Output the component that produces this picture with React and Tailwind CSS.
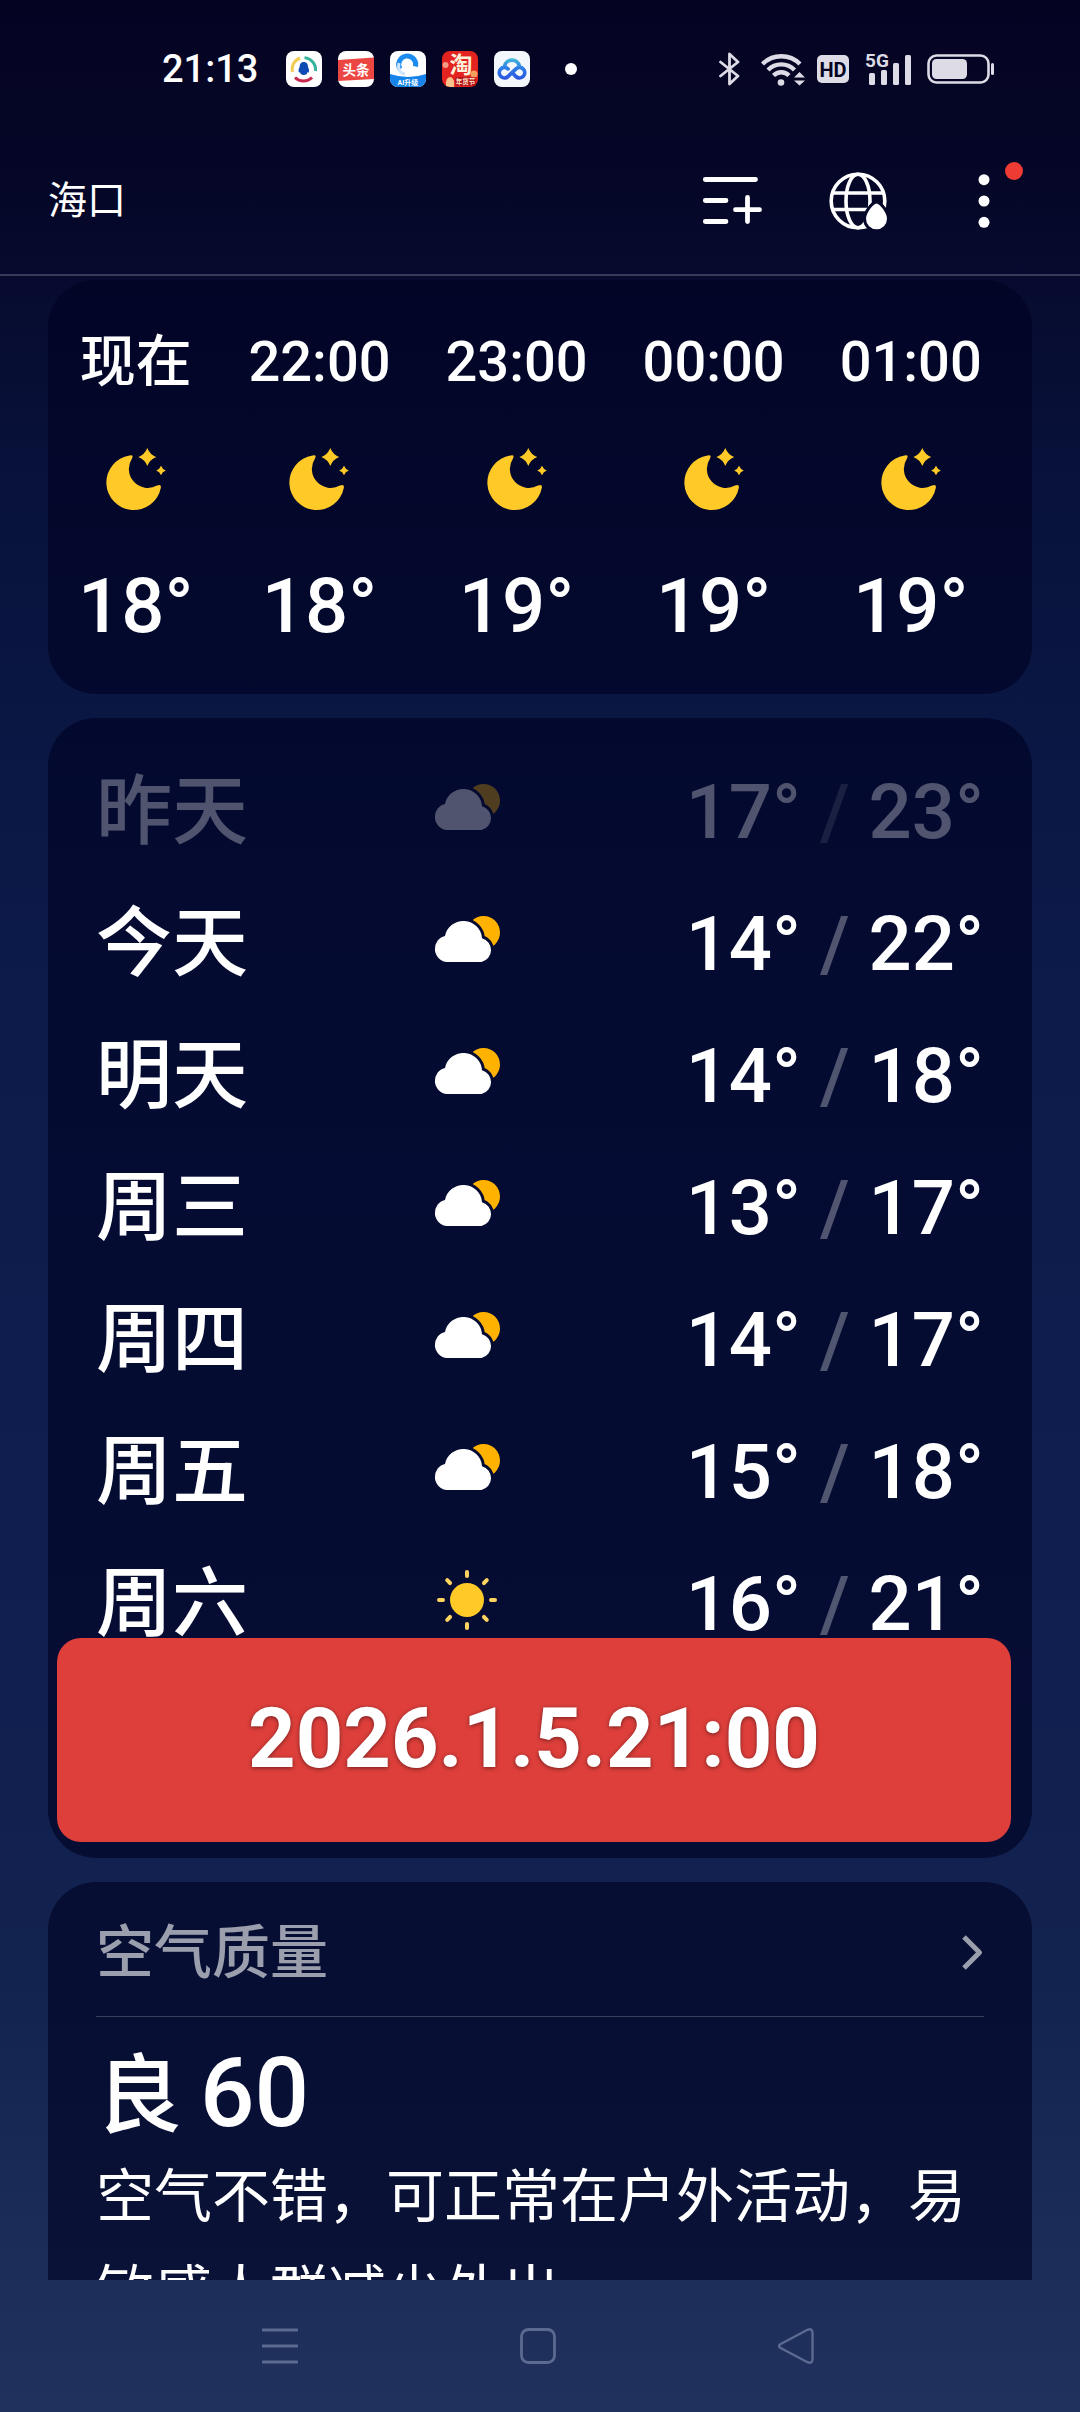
const hours = [
  { time: '现在', temp: 18 },
  { time: '22:00', temp: 18 },
  { time: '23:00', temp: 19 },
  { time: '00:00', temp: 19 },
  { time: '01:00', temp: 19 },
];

const days = [
  { name: '昨天', icon: 'cloud', low: 17, high: 23, past: true },
  { name: '今天', icon: 'cloud', low: 14, high: 22 },
  { name: '明天', icon: 'cloud', low: 14, high: 18 },
  { name: '周三', icon: 'cloud', low: 13, high: 17 },
  { name: '周四', icon: 'cloud', low: 14, high: 17 },
  { name: '周五', icon: 'cloud', low: 15, high: 18 },
  { name: '周六', icon: 'sun', low: 16, high: 21 },
];

function MoonIcon() {
  return (
    <svg viewBox="0 0 72 72" className="size-[72px]" fill="#ffc928" aria-hidden="true">
      <path d="M29.5 11.4Q34 10.2 32 14.5A19 19 0 0 0 57 41.6Q61.6 39.6 60.8 44A27.5 27.5 0 1 1 29.5 11.4Z" />
      <path d="M47.3 4Q49.8 10.5 56.3 13Q49.8 15.5 47.3 22Q44.8 15.5 38.3 13Q44.8 10.5 47.3 4Z" />
      <path d="M61 21.7Q62.3 25.2 65.8 26.5Q62.3 27.8 61 31.3Q59.7 27.8 56.2 26.5Q59.7 25.2 61 21.7Z" />
    </svg>
  );
}

function CloudIcon() {
  const cloud =
    'M16 54A13.2 13.2 0 0 1 14 28A18.7 18.7 0 0 1 51 30.3A12.2 12.2 0 0 1 50.5 54Z';
  return (
    <svg viewBox="0 0 72 72" className="size-[72px]" aria-hidden="true">
      <mask id="cloud-gap">
        <rect width="72" height="72" fill="#fff" />
        <path d={cloud} fill="#000" stroke="#000" strokeWidth="6" />
      </mask>
      <circle cx="52.5" cy="24.5" r="16.5" fill="#ffb300" mask="url(#cloud-gap)" />
      <path d={cloud} fill="#fff" />
    </svg>
  );
}

function SunIcon() {
  return (
    <svg viewBox="0 0 72 72" className="size-[72px]" aria-hidden="true">
      <circle cx="36" cy="32" r="17" fill="#ffc928" />
      {[0, 45, 90, 135, 180, 225, 270, 315].map((a) => (
        <path
          key={a}
          d="M36 4V8"
          transform={`rotate(${a} 36 32)`}
          stroke="#ffd560"
          strokeWidth="4"
          strokeLinecap="round"
        />
      ))}
    </svg>
  );
}

function AppIcons() {
  return (
    <div className="flex gap-4">
      <svg viewBox="0 0 36 36" className="size-9" aria-hidden="true">
        <rect width="36" height="36" rx="8" fill="#fff" />
        <g fill="none" strokeWidth="3">
          <path d="M6.500 21A12 12 0 0 1 14 7" stroke="#f2cb52" />
          <path d="M18.500 6.800A12 12 0 0 1 29.500 20" stroke="#35b39a" />
          <path d="M9 26.500A12 12 0 0 0 26 26.500" stroke="#c9284f" />
        </g>
        <path
          d="M17.800 11C14.800 11 13.600 13.300 13.600 16C12.500 18 12.300 20 12.900 21.500C13.500 21.800 14 21 14 21C14 22.500 15 24 17.800 24C20.600 24 21.500 22.500 21.600 21C21.600 21 22.200 21.800 22.700 21.500C23.300 20 23.100 18 22 16C22 13.300 20.800 11 17.800 11Z"
          fill="#0f4bb5"
        />
      </svg>
      <svg viewBox="0 0 36 36" className="size-9" aria-hidden="true">
        <rect width="36" height="36" rx="8" fill="#fff" />
        <path d="M0 9L36 6.500V28L0 30Z" fill="#ec4643" />
        <text
          x="18"
          y="23.500"
          fontSize="13.500"
          fontWeight="700"
          fill="#fff"
          textAnchor="middle"
          fontFamily="Noto Sans CJK SC, sans-serif"
        >
          头条
        </text>
      </svg>
      <svg viewBox="0 0 36 36" className="size-9" aria-hidden="true">
        <rect width="36" height="36" rx="8" fill="#fff" />
        <path d="M0 23Q18 29 36 23V28A8 8 0 0 1 28 36H8A8 8 0 0 1 0 28Z" fill="#1583ea" />
        <path d="M10 18A8.500 8.500 0 1 1 25.500 15.500" fill="none" stroke="#1c8cf0" strokeWidth="5" />
        <path d="M9 12Q7 22 15 23" fill="none" stroke="#cfe6fb" strokeWidth="3" />
        <text
          x="18"
          y="34"
          fontSize="7"
          fontWeight="700"
          fill="#fff"
          textAnchor="middle"
          fontFamily="Roboto, Noto Sans CJK SC, sans-serif"
        >
          AI升级
        </text>
      </svg>
      <svg viewBox="0 0 36 36" className="size-9 overflow-visible" aria-hidden="true">
        <rect width="36" height="36" rx="8" fill="#e2231f" />
        <circle cx="3.500" cy="14" r="3" fill="#f49a86" />
        <circle cx="32" cy="23" r="3.500" fill="#f5a05c" />
        <path d="M4 35Q3 26 9 26Q13 28 12 36H8Z" fill="#f6c48a" />
        <text
          x="19"
          y="22"
          fontSize="23"
          fontWeight="700"
          fill="#fdf0d8"
          textAnchor="middle"
          fontFamily="Noto Sans CJK SC, sans-serif"
        >
          淘
        </text>
        <rect x="13" y="26" width="21" height="9" rx="2" fill="#b8141c" />
        <text
          x="23.500"
          y="33"
          fontSize="6.500"
          fontWeight="700"
          fill="#fde6c8"
          textAnchor="middle"
          fontFamily="Noto Sans CJK SC, sans-serif"
        >
          年货节
        </text>
      </svg>
      <svg viewBox="0 0 36 36" className="size-9" aria-hidden="true">
        <defs>
          <linearGradient id="pan" gradientUnits="userSpaceOnUse" x1="0" y1="7" x2="0" y2="28">
            <stop offset="0" stopColor="#45bcd6" />
            <stop offset="0.500" stopColor="#2f7be8" />
            <stop offset="1" stopColor="#2d55dc" />
          </linearGradient>
        </defs>
        <rect width="36" height="36" rx="8" fill="#f4f8fd" />
        <g fill="none" stroke="url(#pan)" strokeWidth="3.800" strokeLinecap="round">
          <path d="M10.500 15.500A7.600 7.600 0 0 1 25.500 15.500" />
          <path d="M14 25.500A5.200 5.200 0 1 1 14 17.800M22 17.800A5.200 5.200 0 1 1 22 25.500L18.500 22M14 25.500L22 17.800" />
        </g>
      </svg>
    </div>
  );
}

function StatusBar() {
  return (
    <div className="flex h-[138px] shrink-0 items-center justify-between pl-[162px] pr-[85px]">
      <div className="flex items-center">
        <time className="w-[124px] text-[38px] font-medium leading-none">21:13</time>
        <AppIcons />
        <span className="ml-[35px] size-3 rounded-full bg-white" />
      </div>
      <div className="flex items-center text-[#dddbe5]">
        <svg viewBox="0 0 22 34" className="mr-5 h-[34px] w-[22px]" aria-hidden="true">
          <path
            d="M1.500 10L19 24L10.500 32V2L19 10L1.500 24"
            fill="none"
            stroke="currentColor"
            strokeWidth="2.800"
            strokeLinejoin="round"
            strokeLinecap="round"
          />
        </svg>
        <svg viewBox="0 0 44 34" className="mr-3 h-[34px] w-[44px]" aria-hidden="true">
          <g fill="none" stroke="currentColor" strokeWidth="4.400">
            <path d="M1.500 12A26.500 26.500 0 0 1 39 12" />
            <path d="M7 18A18.500 18.500 0 0 1 33.500 18" />
            <path d="M12.500 23.500A11 11 0 0 1 28 23.500" />
          </g>
          <circle cx="20" cy="30.500" r="3.300" fill="currentColor" />
          <path d="M38.500 20L44 25.500H33ZM38.500 33.500L44 28.500H33Z" fill="currentColor" />
        </svg>
        <svg viewBox="0 0 32 28" className="mr-3.5 h-7 w-8" aria-hidden="true">
          <rect width="32" height="28" rx="5" fill="currentColor" />
          <text
            x="16"
            y="21.500"
            fontSize="20"
            fontWeight="700"
            fill="#050423"
            textAnchor="middle"
            fontFamily="Roboto, sans-serif"
          >
            HD
          </text>
        </svg>
        <svg
          viewBox="0 0 48 34"
          className="mr-4 h-[34px] w-12 overflow-visible"
          fill="currentColor"
          aria-hidden="true"
        >
          <text x="2" y="15" fontSize="19" fontWeight="700" fontFamily="Roboto, sans-serif">
            5G
          </text>
          <rect x="6" y="21" width="6" height="12" rx="1.500" />
          <rect x="18" y="18" width="6" height="15" rx="1.500" />
          <rect x="30" y="11" width="6" height="22" rx="1.500" />
          <rect x="42" y="3" width="6" height="30" rx="1.500" />
        </svg>
        <svg viewBox="0 0 68 30" className="h-[30px] w-[68px]" aria-hidden="true">
          <rect x="1.500" y="1.500" width="60" height="27" rx="8" fill="none" stroke="currentColor" strokeWidth="2.600" />
          <rect x="5" y="5" width="35" height="20" rx="4.500" fill="currentColor" />
          <rect x="64" y="9" width="3" height="12" rx="1.500" fill="currentColor" />
        </svg>
      </div>
    </div>
  );
}

function Header() {
  const drop =
    'M50.500 34.500C53.500 34.500 61 43.500 61 49.800A10.500 10.500 0 0 1 40 49.800C40 43.500 47.500 34.500 50.500 34.500Z';
  return (
    <>
      <header className="mb-2.5 flex h-[126px] shrink-0 items-center justify-between pl-12 pr-16">
        <h1 className="text-[39px] leading-none">海口</h1>
        <div className="flex gap-[62px]">
          <button type="button" aria-label="添加城市">
            <svg viewBox="0 0 64 64" className="size-16" aria-hidden="true">
              <path
                d="M5.300 10.500H55.500M5.300 31.500H26M5.300 52.500H26M35.500 40.700H59.500M47.500 28.500V52.500"
                stroke="#fff"
                strokeWidth="4.800"
                strokeLinecap="round"
              />
            </svg>
          </button>
          <button type="button" aria-label="天气地图">
            <svg viewBox="0 0 64 64" className="size-16" aria-hidden="true">
              <mask id="drop-gap">
                <rect width="64" height="64" fill="#fff" />
                <path d={drop} fill="#000" stroke="#000" strokeWidth="6" />
              </mask>
              <g fill="none" stroke="#fff" strokeWidth="3.600" mask="url(#drop-gap)">
                <circle cx="32" cy="32" r="26.800" />
                <ellipse cx="32" cy="32" rx="12" ry="26.800" />
                <path d="M7 24H57M7 40.500H57" />
              </g>
              <path d={drop} fill="#fff" />
            </svg>
          </button>
          <button type="button" aria-label="更多" className="relative">
            <svg viewBox="0 0 64 64" className="size-16" fill="#fff" aria-hidden="true">
              <circle cx="32" cy="10.700" r="5.500" />
              <circle cx="32" cy="32" r="5.500" />
              <circle cx="32" cy="53.300" r="5.500" />
            </svg>
            <span className="absolute -right-[7px] -top-[7px] size-[18px] rounded-full bg-[#ee3b33]" />
          </button>
        </div>
      </header>
      <div className="h-0.5 shrink-0 bg-white/20" />
    </>
  );
}

function HourlyCard() {
  return (
    <section className="flex gap-[55px] overflow-hidden rounded-[48px] bg-[#000122]/62 pb-11 pl-[30px] pt-[46px] font-medium">
      {hours.map((h) => (
        <div key={h.time} className="flex shrink-0 flex-col items-center gap-[46px]">
          <span className="text-[56px] leading-[72px]">{h.time}</span>
          <MoonIcon />
          <span className="text-[76px] leading-[88px]">{h.temp}°</span>
        </div>
      ))}
    </section>
  );
}

function DailyCard() {
  return (
    <section className="relative rounded-[48px] bg-[#000122]/62 px-12 pb-[188px] pt-7">
      <ul className="text-[76px] font-medium leading-[88px]">
        {days.map((d) => (
          <li
            key={d.name}
            className={`flex h-[132px] items-center justify-between ${d.past ? 'opacity-30' : ''}`}
          >
            <span>{d.name}</span>
            {d.icon === 'sun' ? <SunIcon /> : <CloudIcon />}
            <span>
              {d.low}° <span className="opacity-30">/</span> {d.high}°
            </span>
          </li>
        ))}
      </ul>
      <div className="absolute bottom-4 left-[9px] right-[21px] flex h-[204px] items-center justify-center rounded-[24px] bg-[#de3f3b] pb-1 text-[83px] font-bold leading-none [text-shadow:0_1px_4px_rgba(0,0,0,0.5)]">
        2026.1.5.21:00
      </div>
    </section>
  );
}

function AirCard() {
  return (
    <section className="rounded-t-[48px] bg-[#000122]/62 px-12">
      <button
        type="button"
        className="flex h-[135px] w-full items-center justify-between border-b border-white/20 pt-2 text-[58px] font-medium leading-none text-white/60"
      >
        空气质量
        <svg viewBox="0 0 24 40" className="h-10 w-6" aria-hidden="true">
          <path
            d="M4 4L19.500 19.500L4 35"
            fill="none"
            stroke="currentColor"
            strokeWidth="5"
            strokeLinejoin="round"
          />
        </svg>
      </button>
      <p className="flex items-baseline gap-[18px] pt-6 text-[86px] font-medium leading-[104px]">
        良<span className="text-[96px]">60</span>
      </p>
      <p className="text-[58px] leading-[96px]">空气不错，可正常在户外活动，易敏感人群减少外出。</p>
    </section>
  );
}

function NavBar() {
  return (
    <nav className="flex h-[132px] shrink-0 items-center pl-[151px] pr-[155px] text-[#5b6a90]">
      <button type="button" aria-label="最近任务" className="flex flex-1 justify-center">
        <svg viewBox="0 0 36 36" className="size-9" aria-hidden="true">
          <path d="M1 2H35M1 18H35M1 34H35" stroke="currentColor" strokeWidth="3" strokeLinecap="round" />
        </svg>
      </button>
      <button type="button" aria-label="主屏幕" className="flex flex-1 justify-center">
        <svg viewBox="0 0 36 36" className="size-9" fill="none" aria-hidden="true">
          <rect x="1.500" y="1.500" width="33" height="33" rx="7" stroke="currentColor" strokeWidth="2.800" />
        </svg>
      </button>
      <button type="button" aria-label="返回" className="flex flex-1 justify-center">
        <svg viewBox="0 0 36 36" className="size-9" fill="none" aria-hidden="true">
          <path
            d="M2.200 16.200L29.500 1.800Q34.200 0 34.500 4.500V31.500Q34.200 36 29.500 34.200L2.200 19.800Q0 18 2.200 16.200Z"
            stroke="currentColor"
            strokeWidth="2.400"
          />
        </svg>
      </button>
    </nav>
  );
}

export default function App() {
  return (
    <div
      lang="zh-CN"
      className="flex h-screen flex-col bg-[linear-gradient(180deg,#050322_0%,#050728_8%,#070c31_13%,#08123b_20%,#0a1743_30%,#0d1b4b_42%,#101f4f_70%,#13234f_82%,#1e2e5a_95%,#20315d_100%)] font-[Roboto,'Noto_Sans_CJK_SC',sans-serif] text-white"
    >
      <StatusBar />
      <Header />
      <main className="flex min-h-0 flex-1 flex-col overflow-hidden px-12 pt-1">
        <div className="flex flex-col gap-6">
          <HourlyCard />
          <DailyCard />
          <AirCard />
        </div>
      </main>
      <NavBar />
    </div>
  );
}
